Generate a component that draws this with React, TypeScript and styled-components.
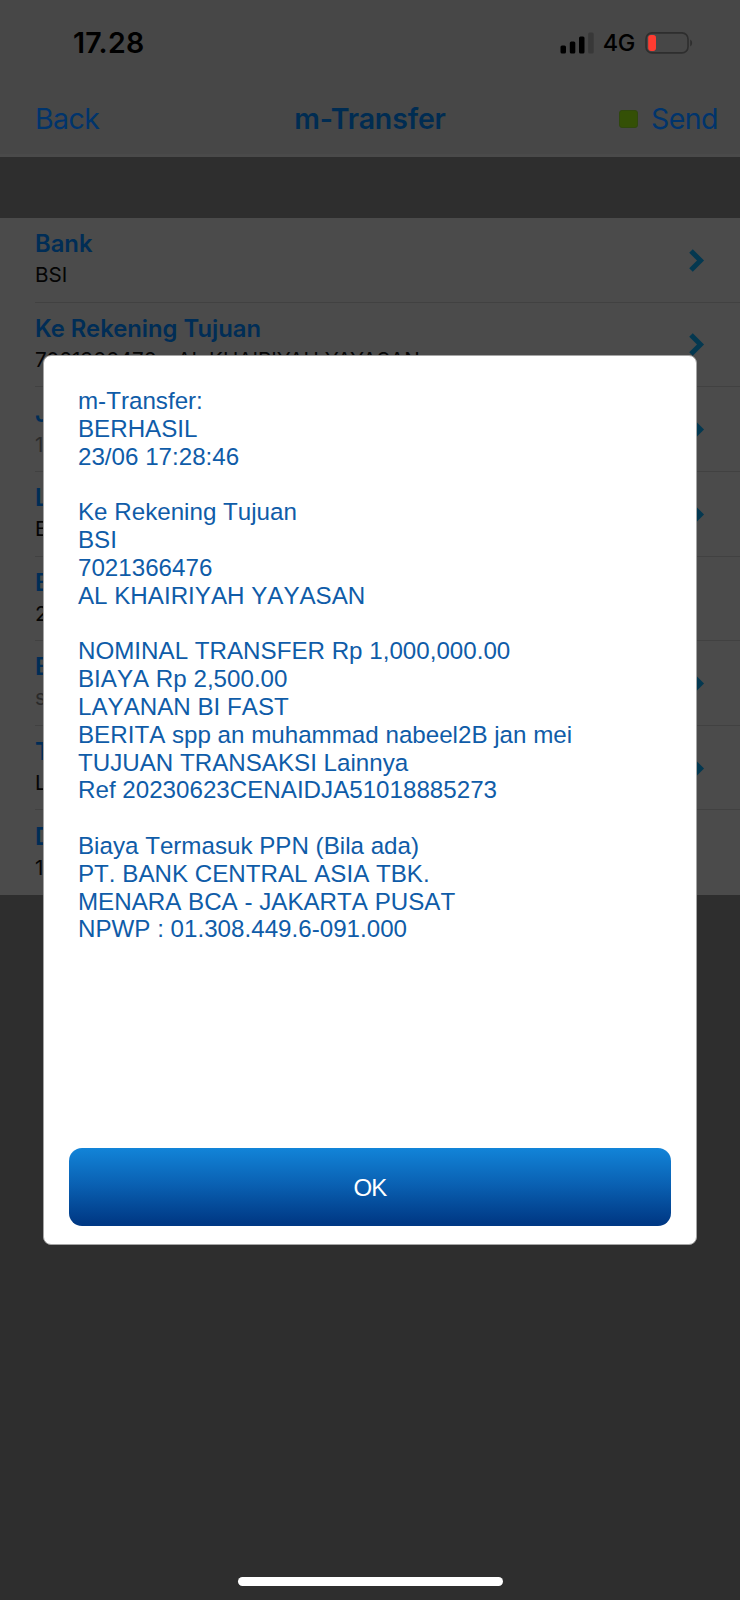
import React from "react";
import styled, { createGlobalStyle } from "styled-components";

const GlobalStyle = createGlobalStyle`
  * { box-sizing: border-box; }
  body { margin: 0; background: #2e2e2e; }
`;

const Screen = styled.div`
  position: relative;
  width: 740px;
  height: 1600px;
  overflow: hidden;
  background: #2e2e2e;
  font-family: Inter, "Liberation Sans", sans-serif;
`;

const Header = styled.header`
  height: 157px;
  background: #474747;
  border-bottom: 3px solid #4a4a4a;
`;

const StatusBar = styled.div`
  display: flex;
  align-items: center;
  justify-content: space-between;
  height: 84px;
  padding: 0 47px 0 73px;
  color: #000;
`;

const Clock = styled.span`
  margin-top: 2px;
  font-size: 28.5px;
  font-weight: 600;
  line-height: 34px;
  letter-spacing: 0.3px;
`;

const StatusIcons = styled.div`
  display: flex;
  align-items: center;
  padding-top: 1px;
`;

const Network = styled.span`
  margin: 1px 10px 0 9px;
  font-size: 23.5px;
  font-weight: 500;
  line-height: 28px;
  letter-spacing: -0.4px;
`;

const NavBar = styled.nav`
  display: grid;
  grid-template-columns: 1fr auto 1fr;
  align-items: center;
  height: 69px;
  padding: 1px 35px 0;
  font-size: 28.5px;
  line-height: 36px;
  letter-spacing: -0.55px;
  color: #00346c;
`;

const Title = styled.h1`
  margin: 0;
  font-size: 28.5px;
  font-weight: 600;
  line-height: 36px;
  letter-spacing: -0.15px;
  color: #002c52;
`;

const SendGroup = styled.div`
  display: flex;
  align-items: center;
  justify-content: flex-end;
  gap: 13px;
  margin-right: -13px;
`;

const StatusLight = styled.span`
  width: 19px;
  height: 18px;
  border: 1px solid #2f470f;
  border-radius: 3px;
  background: #345006;
`;

const Form = styled.main`
  margin-top: 61px;
  background: #4b4b4b;
  height: 677px;
  display: grid;
  grid-template-rows: repeat(8, 1fr);
`;

const Field = styled.div`
  display: flex;
  align-items: center;
  justify-content: space-between;
  margin-left: 35px;
  padding-right: 35px;
  border-bottom: 1px solid #414141;
  &:last-child { border-bottom: 0; }
`;

const Label = styled.div`
  margin-top: -1px;
  font-size: 23.8px;
  font-weight: 600;
  line-height: 32px;
  color: #002d56;
`;

const Value = styled.div<{ $muted?: boolean }>`
  font-size: 20.65px;
  line-height: 30px;
  white-space: nowrap;
  color: ${(p) => (p.$muted ? "#2a2a2a" : "#050505")};
`;

const Dialog = styled.section`
  position: absolute;
  left: 43px;
  top: 355px;
  width: 654px;
  height: 890px;
  display: flex;
  flex-direction: column;
  justify-content: space-between;
  padding: 31px 25px 18px;
  border: 1px solid #a5a5a5;
  border-radius: 8px;
  background: #fff;
`;

const Message = styled.div`
  padding-left: 9px;
  font-family: "Liberation Sans", Arial, sans-serif;
  font-size: 24.17px;
  font-kerning: none;
  line-height: 27.81px;
  color: #0f5ca8;
`;

const Line = styled.div`
  width: max-content;
  min-height: 27.81px;
  white-space: nowrap;
`;

const OkButton = styled.button`
  height: 78px;
  border: 0;
  border-radius: 13px;
  background: linear-gradient(#1284d8, #0a62b4 45%, #003985 96%);
  color: #fff;
  font-family: "Liberation Sans", Arial, sans-serif;
  font-size: 24px;
  letter-spacing: -0.8px;
  padding-top: 2px;
`;

const HomeIndicator = styled.div`
  position: absolute;
  left: 238px;
  top: 1577px;
  width: 265px;
  height: 9px;
  border-radius: 5px;
  background: #fff;
`;

const Signal = () => (
  <svg width="34" height="22" viewBox="0 0 34 22">
    <rect x="0.5" y="13.5" width="5.5" height="8" rx="1.5" />
    <rect x="9.8" y="9.500" width="5.5" height="12" rx="1.5" />
    <rect x="19" y="4.500" width="5.5" height="17" rx="1.5" />
    <rect x="28.2" y="0.5" width="5.5" height="21" rx="1.5" fill="#383838" />
  </svg>
);

const Battery = () => (
  <svg width="48" height="22" viewBox="0 0 48 22">
    <rect x="1" y="0.9" width="42" height="20" rx="6" fill="none" stroke="#2e2e2e" strokeWidth="1.6" />
    <rect x="3.2" y="2.900" width="7.8" height="16" rx="2.8" fill="#ff3c31" />
    <path d="M45.2 7.500c2.600 1.500 2.600 5.500 0 7z" fill="#2e2e2e" />
  </svg>
);

const Chevron = () => (
  <svg width="16" height="24" viewBox="0 0 16 24">
    <path d="M2 3L11.500 12.500L2 22" fill="none" stroke="#043850" strokeWidth="5" />
  </svg>
);

interface FieldData {
  label: string;
  value: string;
  muted?: boolean;
  arrow?: boolean;
}

const fields: FieldData[] = [
  { label: "Bank", value: "BSI", arrow: true },
  { label: "Ke Rekening Tujuan", value: "7021366476 - AL KHAIRIYAH YAYASAN", arrow: true },
  { label: "J", value: "1", muted: true, arrow: true },
  { label: "L", value: "B", arrow: true },
  { label: "B", value: "2" },
  { label: "B", value: "s", muted: true, arrow: true },
  { label: "T", value: "L", arrow: true },
  { label: "D", value: "1" },
];

const lines: string[] = [
  "m-Transfer:",
  "BERHASIL",
  "23/06 17:28:46",
  "",
  "Ke Rekening Tujuan",
  "BSI",
  "7021366476",
  "AL KHAIRIYAH YAYASAN",
  "",
  "NOMINAL TRANSFER Rp 1,000,000.00",
  "BIAYA Rp 2,500.00",
  "LAYANAN BI FAST",
  "BERITA spp an muhammad nabeel2B jan mei",
  "TUJUAN TRANSAKSI Lainnya",
  "Ref 20230623CENAIDJA51018885273",
  "",
  "Biaya Termasuk PPN (Bila ada)",
  "PT. BANK CENTRAL ASIA TBK.",
  "MENARA BCA - JAKARTA PUSAT",
  "NPWP : 01.308.449.6-091.000",
];

export default function App() {
  return (
    <Screen>
      <GlobalStyle />
      <Header>
        <StatusBar>
          <Clock>17.28</Clock>
          <StatusIcons>
            <Signal />
            <Network>4G</Network>
            <Battery />
          </StatusIcons>
        </StatusBar>
        <NavBar>
          <span>Back</span>
          <Title>m-Transfer</Title>
          <SendGroup>
            <StatusLight />
            <span>Send</span>
          </SendGroup>
        </NavBar>
      </Header>
      <Form>
        {fields.map((f, i) => (
          <Field key={i}>
            <div>
              <Label>{f.label}</Label>
              <Value $muted={f.muted}>{f.value}</Value>
            </div>
            {f.arrow && <Chevron />}
          </Field>
        ))}
      </Form>
      <Dialog>
        <Message>
          {lines.map((text, i) => (
            <Line key={i}>{text}</Line>
          ))}
        </Message>
        <OkButton>OK</OkButton>
      </Dialog>
      <HomeIndicator />
    </Screen>
  );
}
